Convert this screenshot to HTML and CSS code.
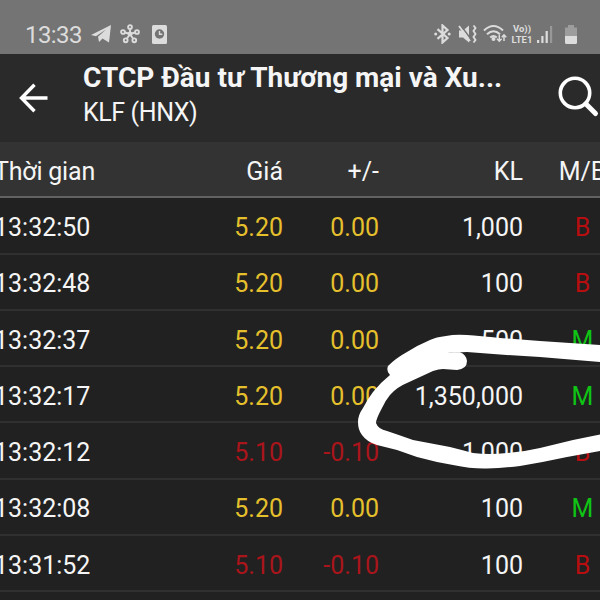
FILE: index.html
```html
<!DOCTYPE html>
<html lang="vi">
<head>
  <meta charset="UTF-8" />
  <meta name="viewport" content="width=device-width, initial-scale=1.0" />
  <title>KLF (HNX)</title>
  <link rel="stylesheet" href="styles.css">
</head>
<body>
  <div class="screen">
    <div class="status-bar">
      <span class="clock">13:33</span>
      <svg class="icon-telegram" width="21" height="20" viewBox="0 0 21 20"><path d="M0 11 20 1 18 18.500 11.500 14.500 8 18 7 12.800 15 5.500 5 12.200Z" fill="currentColor"/></svg>
      <svg class="icon-hub" width="20" height="20" viewBox="0 0 20 20" fill="none" stroke="currentColor" stroke-width="1.900"><path d="M10 10V5M10 10 5 8.500M10 10 15 8.500M10 10 7 14.500M10 10 13 14.500"/><circle cx="10" cy="3" r="1.900"/><circle cx="3" cy="8" r="1.900"/><circle cx="17" cy="8" r="1.900"/><circle cx="5.700" cy="16.300" r="1.900"/><circle cx="14.300" cy="16.300" r="1.900"/><circle cx="10" cy="10" r="1.500" fill="currentColor"/></svg>
      <svg class="icon-clock" width="15" height="19" viewBox="0 0 15 19"><rect width="15" height="19" rx="1.500" fill="currentColor"/><circle cx="7.500" cy="9" r="4.700" fill="#747474"/><path d="M7.500 6v3.300h2.800" fill="none" stroke="currentColor" stroke-width="1.400"/></svg>
      <div class="status-right">
        <svg width="17" height="20" viewBox="0 0 17 20"><path d="M3.500 5.200 13.500 14 8.500 18.500V1.500L13.500 6 3.500 14.800" fill="none" stroke="currentColor" stroke-width="2.200"/><circle cx="1.700" cy="10" r="1.500" fill="currentColor"/><circle cx="15.200" cy="10" r="1.500" fill="currentColor"/></svg>
        <svg class="icon-mute" width="19" height="20" viewBox="0 0 19 20"><path d="M1 6.500h4l6-5v17l-6-5H1Z" fill="currentColor"/><path d="M2.500 1 13.500 16" stroke="#747474" stroke-width="1.500"/><path d="m1 2 11 15M15.500 1.500l2 2.500-2 3 2 3-2 3 2 3-2 2.500" fill="none" stroke="currentColor" stroke-width="1.900"/></svg>
        <svg class="icon-wifi" width="24" height="20" viewBox="0 0 24 20" fill="none" stroke="currentColor" stroke-width="2"><path d="M1 6.500Q10.500-2.500 20 6.500M4 10.200q6.500-6 13 0M7.200 13.600q3.300-3 6.600 0"/><circle cx="10.500" cy="15" r="1" fill="currentColor"/><path d="M16.300 11v6M14 14.800l2.300 2.400 2.300-2.400M21 17v-6M18.800 13.200l2.200-2.400 2.200 2.400" stroke-width="1.500"/></svg>
        <span class="volte"><span>Vo))</span><span>LTE1</span></span>
        <svg class="icon-signal" width="16" height="17" viewBox="0 0 16 17" fill="currentColor"><path d="M0 14h2.200v3H0zM4.300 10h2.200v7H4.300zM8.600 5h2.200v12H8.600z"/><path d="M13 0h2.200v17H13z" opacity=".35"/></svg>
        <svg class="icon-battery" width="12" height="19" viewBox="0 0 12 19" fill="currentColor"><path d="M3 0h6v2.500h3V11H0V2.500h3Z" opacity=".4"/><path d="M0 11h12v6.500Q12 19 10.500 19h-9Q0 19 0 17.500Z"/></svg>
      </div>
    </div>

    <header class="app-bar">
      <svg class="back" width="30" height="30" viewBox="0 0 30 30"><path d="M28.500 15H3M15.500 1.800 2.500 15l13 13.200" fill="none" stroke="#fff" stroke-width="3.400"/></svg>
      <div class="titles">
        <h1>CTCP Đầu tư Thương mại và Xu...</h1>
        <p>KLF (HNX)</p>
      </div>
      <svg class="search" width="42" height="42" viewBox="0 0 42 42"><circle cx="17" cy="17" r="14.700" fill="none" stroke="#fff" stroke-width="3.600"/><path d="m28 28 9.500 9.500" stroke="#fff" stroke-width="5" stroke-linecap="round"/></svg>
    </header>

    <div class="trades">
      <div class="row head"><span>Thời gian</span><span>Giá</span><span>+/-</span><span>KL</span><span>M/B</span></div>
      <div class="row flat sell"><span>13:32:50</span><span>5.20</span><span>0.00</span><span>1,000</span><span>B</span></div>
      <div class="row flat sell"><span>13:32:48</span><span>5.20</span><span>0.00</span><span>100</span><span>B</span></div>
      <div class="row flat buy"><span>13:32:37</span><span>5.20</span><span>0.00</span><span>500</span><span>M</span></div>
      <div class="row flat buy"><span>13:32:17</span><span>5.20</span><span>0.00</span><span>1,350,000</span><span>M</span></div>
      <div class="row down sell"><span>13:32:12</span><span>5.10</span><span>-0.10</span><span>1,000</span><span>B</span></div>
      <div class="row flat buy"><span>13:32:08</span><span>5.20</span><span>0.00</span><span>100</span><span>M</span></div>
      <div class="row down sell"><span>13:31:52</span><span>5.10</span><span>-0.10</span><span>100</span><span>B</span></div>
    </div>

    <!-- hand-drawn marker around the big trade -->
    <svg class="marker" width="600" height="600" viewBox="0 0 600 600">
      <path fill="#fff" d="M600 345 540 341 500 338Q480 336 467 335Q455 334 446 336Q436 337 430 340Q418 345 407 352Q396 358 388 366Q386 371 390 375Q380 383 373 392Q367 400 363 408Q358 415 358 422Q358 430 362 435Q367 442 377 445L397 450 417 457Q435 462 453 465Q472 469 487 468.500Q504 468 520 466Q544 462 567 457L600 451V434.500L573 440 540 448Q523 452 507 453Q489 455 473 453Q462 450 450 447L413 440Q399 435 387 431 378 429 376 423 376 419 382 408 385 401 390 395 397 387 407 383L433 371Q439 369 443 369L457 370Q467 369 467 361 466 354 460 352.500 447 353 447 353L467 352 500 354.500 540 357 600 362Z"/>
    </svg>
  </div>
</body>
</html>
```
FILE: styles.css
```css
* {
  box-sizing: border-box;
  margin: 0;
  padding: 0;
}

body {
  font-family: Roboto, sans-serif;
  background: #212121;
  color: #f5f5f5;
}

svg {
  display: block;
  flex-shrink: 0;
}

.screen {
  position: relative;
  width: 600px;
  height: 600px;
  overflow: hidden;
}

.status-bar {
  display: flex;
  align-items: center;
  height: 54px;
  padding: 14px 23px 0 25px;
  background: #747474;
  color: #dcdcdc;
}

.clock {
  width: 66px;
  padding-top: 2px;
  font-size: 24px;
  letter-spacing: -0.6px;
  line-height: 28px;
}

.icon-hub {
  margin-left: 8px;
}

.icon-clock {
  margin-left: 12px;
}

.status-right {
  display: flex;
  align-items: center;
  margin-left: auto;
}

.icon-mute {
  margin-left: 7px;
}

.icon-wifi {
  margin-left: 6px;
}

.volte {
  display: flex;
  flex-direction: column;
  align-items: center;
  width: 24px;
  margin-left: 3px;
  font-size: 9.5px;
  font-weight: 700;
  line-height: 11px;
}

.icon-signal {
  margin-left: 3px;
}

.icon-battery {
  margin-left: 12px;
}

.app-bar {
  display: flex;
  height: 88px;
  background: #2a2a2a;
}

.back {
  margin: 29px 0 0 19px;
}

.titles {
  width: 476px;
  padding: 7px 0 0 34px;
  white-space: nowrap;
}

h1 {
  font-size: 28px;
  font-weight: 700;
  line-height: 34px;
}

.titles p {
  padding-top: 1px;
  font-size: 25px;
  letter-spacing: -0.4px;
  line-height: 34px;
}

.search {
  margin: 22px 0 0 34px;
}

.row {
  display: grid;
  grid-template-columns: 96px 193px 96px 144px 106px;
  align-items: center;
  width: 635px;
  height: 56.3px;
  margin-left: -6px;
  padding-top: 5px;
  border-bottom: 2px solid #303030;
  font-size: 25px;
  line-height: 30px;
  white-space: nowrap;
}

.row span {
  text-align: right;
}

.row span:first-child {
  text-align: left;
}

.row span:last-child {
  padding-left: 13px;
  text-align: center;
}

.head {
  background: #333;
  border-bottom: 2px solid #626262;
}

.head span:first-child {
  letter-spacing: -0.2px;
}

.flat span:nth-child(2),
.flat span:nth-child(3) {
  color: #e5c02c;
}

.down span:nth-child(2),
.down span:nth-child(3) {
  color: #aa151b;
}

.sell span:last-child {
  color: #b80e10;
}

.buy span:last-child {
  color: #0fc414;
}

.marker {
  position: absolute;
  top: 0;
  left: 0;
}
```
